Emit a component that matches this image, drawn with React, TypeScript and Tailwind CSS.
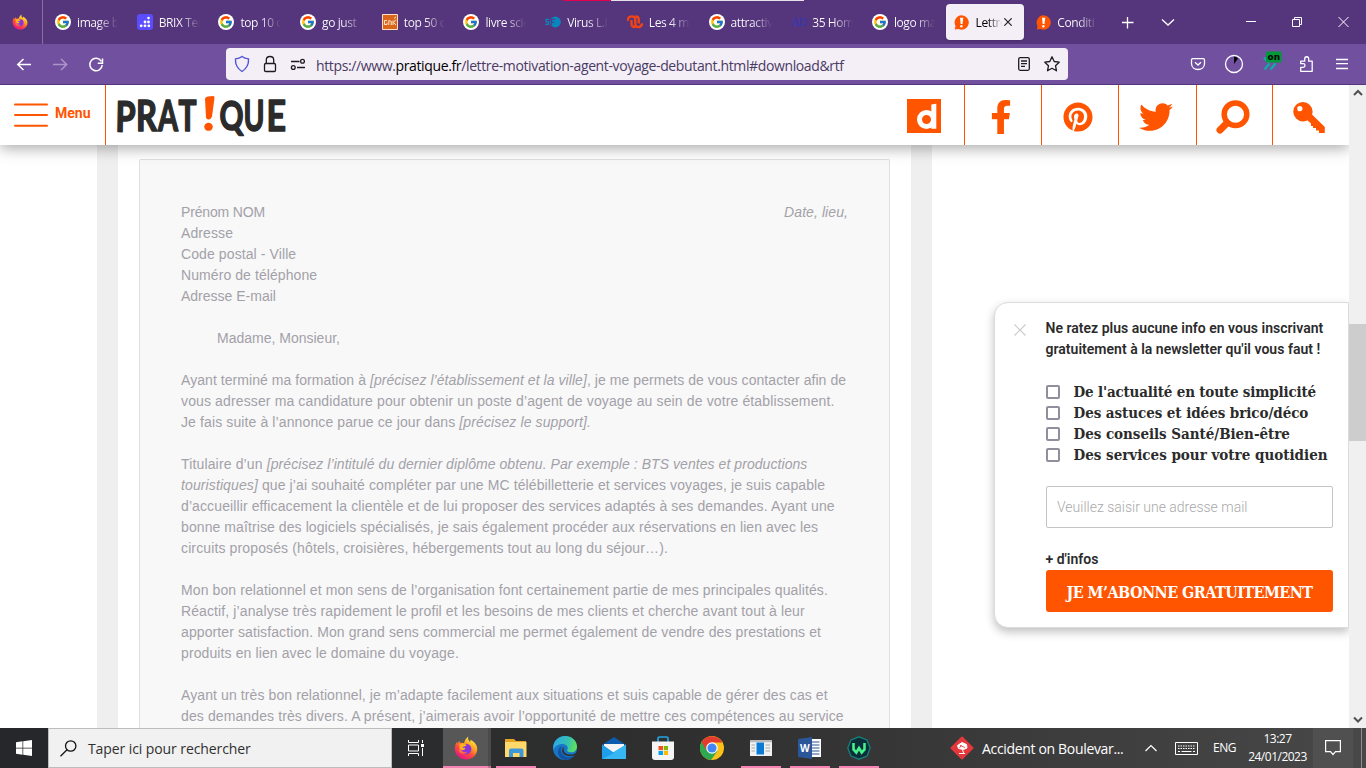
import React from "react";
import { FcGoogle } from "react-icons/fc";
import { FaFacebookF, FaPinterest, FaTwitter } from "react-icons/fa";

function Firefox({ size, id }: { size: number; id: string }) {
  return (
    <svg width={size} height={size} viewBox="0 0 24 24" className="shrink-0">
      <defs>
        <linearGradient id={id} x1="0.8" y1="0.05" x2="0.25" y2="0.95">
          <stop offset="0" stopColor="#fff14f" />
          <stop offset="0.35" stopColor="#ffa61e" />
          <stop offset="0.65" stopColor="#ff4a3d" />
          <stop offset="1" stopColor="#e31587" />
        </linearGradient>
      </defs>
      <path fill={`url(#${id})`} d="M14.5 0.6C13.2 3 15 4.6 16 6c.6-.5.5-1.700.3-2.200C20.600 6 23.400 9 23.200 13.500 22.900 19.500 18 23.500 12 23.500 5.500 23.500.8 18.500.8 12.500.8 9 2 7.300 3 5.800l.3 2C4.200 6.300 5 5.300 5.700 4.900c-.1 1 .2 1.700.7 2.200C8.500 6.600 9 7 10 7.300 10.500 4.500 12.300 1.900 14.500.6Z" />
      <circle cx="12.200" cy="13" r="5.200" fill="#8a35dc" />
      <path fill="#ffb31c" d="M5.500 8.500C8 6.800 11 7.600 12.600 9.200c-1 1.300-3.600 1.200-4.300 2.200 1.200.5 2.400.1 3.200.9-1.300 2.600-4.600 2.200-6 .2Z" />
      <path fill="#ff7139" d="M6 12c1 3.500 4.500 5 7.500 3.800-2 3-7.300 2.600-8.900-1.300Z" />
    </svg>
  );
}

function Brix() {
  return (
    <svg width="16" height="16" viewBox="0 0 16 16">
      <rect width="16" height="16" rx="3" fill="#5b4cff" />
      <g fill="#fff">
        <circle cx="11.500" cy="4" r="1.300" />
        <circle cx="8" cy="8" r="1.400" /><circle cx="11.500" cy="8" r="1.400" />
        <circle cx="4.200" cy="11.800" r="1.400" /><circle cx="8" cy="11.800" r="1.400" /><circle cx="11.800" cy="11.800" r="1.400" />
      </g>
    </svg>
  );
}

function Google() {
  return (
    <span className="flex size-4 items-center justify-center rounded-full bg-white">
      <FcGoogle size={14} />
    </span>
  );
}

function Gnk() {
  return (
    <svg width="16" height="16" viewBox="0 0 16 16">
      <path d="M.5.5h15v15H.5z" fill="#d9661a" stroke="#ffe0c4" />
      <path d="M5 6.500H2.500v4H5V8.700M6.800 11V6.500l2.500 1V11M11 6.500V11M14 5.500L11.500 8.500 14 11M12 4.500l2-1.700" fill="none" stroke="#fff0e0" strokeWidth=".9" />
    </svg>
  );
}

function Sf() {
  return (
    <svg width="17" height="16" viewBox="0 0 17 16">
      <circle cx="11" cy="8" r="5.800" fill="#0b86bd" />
      <path d="M4.300 5.300H1.200V7.800H3.700V10.500H.4" fill="none" stroke="#0b86bd" strokeWidth="1.300" />
      <path d="M10.500 5.300H6.800v6M6.800 8.200h3" fill="none" stroke="#55367c" strokeWidth="1.100" />
    </svg>
  );
}

function Loops() {
  return (
    <svg width="17" height="16" viewBox="0 0 17 16" fill="none" stroke="#f24316" strokeWidth="2.500" strokeLinejoin="round">
      <path d="M.4 7C1 3.500 2.500 2 5 2c2.300 0 3.800 1.500 3.800 3.500v5c0 2 1.200 3 3 3 2.300 0 3.700-1.500 4.500-4" />
      <path d="M4.800 6v4.500c0 1.800 1.200 3 4 3M8.800 2c2.700 0 3.700 1.300 3.700 3.400V9.500" />
    </svg>
  );
}

function Ad() {
  return <span className="w-4 text-center font-['Liberation_Serif'] text-[12px] leading-4 tracking-[-1px] text-[#3038bd]">AD</span>;
}

function Bang() {
  return (
    <svg width="15" height="15" viewBox="0 0 15 15" className="shrink-0">
      <path d="M7.500.3a7.200 7.200 0 1 1-3 13.700L.8 14.600 1.500 11A7.200 7.200 0 0 1 7.500.3Z" fill="#f50" />
      <path d="M6 2.800h3.300L8.500 9H6.700Z" fill="#fff" />
      <circle cx="7.400" cy="11.300" r="1.200" fill="#fff" />
    </svg>
  );
}

const tabs: { icon: React.ReactNode; text: string; active?: boolean }[] = [
  { icon: <Google />, text: "image b" },
  { icon: <Brix />, text: "BRIX Ter" },
  { icon: <Google />, text: "top 10 c" },
  { icon: <Google />, text: "go just" },
  { icon: <Gnk />, text: "top 50 c" },
  { icon: <Google />, text: "livre scie" },
  { icon: <Sf />, text: "Virus L.I" },
  { icon: <Loops />, text: "Les 4 m" },
  { icon: <Google />, text: "attractiv" },
  { icon: <Ad />, text: "35 Hom" },
  { icon: <Google />, text: "logo ma" },
  { icon: <Bang />, text: "Lettre", active: true },
  { icon: <Bang />, text: "Conditi" },
];

function TabBar() {
  return (
    <div className="relative flex h-11 shrink-0 bg-[#55367c] text-white">
      <div className="absolute top-0 left-[563px] flex h-px w-[241px]">
        <span className="w-12 bg-[#e3004f]" />
        <span className="flex-1 bg-[#e8e0ea]" />
      </div>
      <div className="flex w-[43px] items-center border-r border-[#86709f] pl-3">
        <Firefox size={16} id="ffTab" />
      </div>
      <div className="flex w-[1065px] items-center pl-[3px]">
        {tabs.map((t) => (
          <div key={t.text} className="w-[81.7px] shrink-0 px-px">
            <div className={t.active ? "flex h-9 w-[78px] items-center rounded bg-[#f4eef7] pl-2 text-black shadow" : "flex h-9 items-center pl-2"}>
              <span className="flex w-4 shrink-0 justify-center">{t.icon}</span>
              <span
                className={
                  t.active
                    ? "ml-1.5 w-[26px] bg-gradient-to-r from-black from-45% to-transparent bg-clip-text pt-0.5 font-['Open_Sans'] text-[12px] tracking-[-0.4px] whitespace-nowrap text-transparent"
                    : "ml-1.5 w-[41px] bg-gradient-to-r from-white from-50% to-transparent bg-clip-text pt-0.5 font-['Open_Sans'] text-[12px] tracking-[-0.4px] whitespace-nowrap text-transparent"
                }
              >
                {t.text}
              </span>
              {t.active && (
                <svg width="8" height="8" viewBox="0 0 8 8" stroke="#222" strokeWidth="1.200" className="ml-0.5 shrink-0"><path d="M.3.3l7.400 7.400M7.700.3.3 7.700" /></svg>
              )}
            </div>
          </div>
        ))}
      </div>
      <div className="flex flex-1 items-center text-white">
        <svg width="258" height="44" viewBox="1108 0 258 44" fill="none" stroke="currentColor">
          <path d="M1122 22.500h11.500M1127.500 17v11.500" strokeWidth="1.300" />
          <path d="M1162 19.500l6 5.500 6-5.500" strokeWidth="1.300" />
          <path d="M1246 21.500h10M1292.500 19.500h7v7h-7zM1294.500 19.500v-2h7v7h-2M1338.500 17l10 10M1348.500 17l-10 10" strokeWidth="1" />
        </svg>
      </div>
    </div>
  );
}

function Toolbar() {
  return (
    <div className="flex h-[41px] shrink-0 items-center border-b border-[#55367c] bg-[#7150a0] text-white">
      <svg width="226" height="40" viewBox="0 44 226 40" fill="none" stroke="currentColor" strokeWidth="1.500">
        <path d="M31 64.500H18M23.500 59l-5.700 5.500 5.700 5.500" />
        <path d="M53 64.500h13.500M61 59l5.700 5.500L61 70" opacity=".4" />
        <path d="M101.300 61.300A6.200 6.200 0 1 0 102.200 65M102.500 58.500v4.800h-4.800" />
      </svg>
      <div className="flex h-8 w-[842px] items-center rounded bg-[#f4eef7]">
        <svg width="90" height="32" viewBox="226 48 90 32" fill="none" stroke="#1c1b22" strokeWidth="1.300">
          <path d="M242 56.500c2 1.600 4.200 2.200 6.500 2.400.4 5.500-1.800 9.600-6.500 12.600-4.700-3-6.900-7.100-6.500-12.600 2.300-.2 4.500-.8 6.500-2.400Z" stroke="#4f55d8" strokeWidth="1.400" />
          <rect x="264.500" y="63.500" width="11" height="8" rx="1.300" />
          <path d="M266.300 63.500V60c0-4.700 7.400-4.700 7.400 0v3.500" />
          <path d="M291 61.500h8.500M297 67.500h8" strokeWidth="1.600" />
          <circle cx="302.500" cy="61.300" r="1.900" /><circle cx="293.300" cy="67.500" r="1.900" />
        </svg>
        <div className="flex-1 pt-0.5 font-['Open_Sans'] text-[14px] tracking-[-0.37px] whitespace-nowrap text-[#4a3b63]">
          https://www.<span className="text-black">pratique.fr</span>/lettre-motivation-agent-voyage-debutant.html#download&amp;rtf
        </div>
        <svg width="58" height="32" viewBox="1010 48 58 32" fill="none" stroke="#1c1b22" strokeWidth="1.300">
          <rect x="1018.700" y="57.700" width="10.600" height="12.600" rx="1.500" />
          <path d="M1021 61h6M1021 63.700h6M1021 66.300h4" />
          <path d="M1052 56.800l2.200 4.700 5 .7-3.700 3.500 1 5.100-4.500-2.500-4.500 2.500 1-5.100-3.700-3.500 5-.7Z" strokeLinejoin="round" />
        </svg>
      </div>
      <svg width="298" height="40" viewBox="1068 44 298 40" fill="none" stroke="currentColor" strokeWidth="1.300">
        <path d="M1192.700 58.700h10.600q1.200 0 1.200 1.200v3.600c0 8-13 8-13 0v-3.600q0-1.200 1.200-1.200ZM1195 62.300l3 2.800 3-2.800" />
        <circle cx="1234" cy="64" r="8.500" />
        <path d="M1234 56.500q2.500.2 4 2l-4 5.500Z" fill="#000" stroke="none" />
        <path d="M1264 57.500l5 5.500M1264.500 69.500l5-6M1270.500 69.500l5-6" stroke="#12aaa5" strokeWidth="2.400" />
        <rect x="1266" y="51.500" width="15.500" height="11" rx="1" fill="#009939" stroke="none" />
        <text x="1267.500" y="60" fill="#000" stroke="none" fontFamily="DejaVu Sans" fontWeight="bold" fontSize="9" textLength="12.500" lengthAdjust="spacingAndGlyphs">on</text>
        <path d="M1300.700 71.300v-4h2.500c2.400 0 2.400-3.600 0-3.600h-2.500v-2.500h4v-2.200c0-3 4-3 4 0v2.200h3.500v10.100Z" strokeLinejoin="round" />
        <path d="M1336 59.500h12M1336 63.700h12M1336 68.500h12" />
      </svg>
    </div>
  );
}

function SiteHeader() {
  return (
    <header className="relative z-10 flex h-[60px] shrink-0 bg-white text-[#ff5500] shadow-[0_3px_14px_rgba(0,0,0,0.35)]">
      <div className="flex w-[106px] items-center border-r border-[#ff5500] pl-3.5">
        <svg width="34" height="26" viewBox="0 0 34 26" stroke="currentColor" strokeWidth="2" strokeLinecap="round"><path d="M1 2.500h32M1 13h32M1 23.700h32" /></svg>
        <span className="ml-[7px] pb-1 font-[Roboto] text-[14px] font-bold">Menu</span>
      </div>
      <svg width="781" height="60" viewBox="106 85 781 60" fontFamily="Lato" fontWeight="700">
        <g fontSize="42" fill="#2b2b2b" stroke="#2b2b2b" strokeWidth="1.600" strokeLinejoin="round">
          <text transform="translate(115.200 131.500) rotate(1)" textLength="20" lengthAdjust="spacingAndGlyphs">P</text>
          <text x="136" y="130.500" textLength="21" lengthAdjust="spacingAndGlyphs">R</text>
          <text x="158" y="131" textLength="20" lengthAdjust="spacingAndGlyphs">A</text>
          <text x="178.500" y="131" textLength="18" lengthAdjust="spacingAndGlyphs">T</text>
          <text x="219.500" y="130" fontSize="40" textLength="24" lengthAdjust="spacingAndGlyphs">Q</text>
          <text x="243.500" y="130.500" textLength="21" lengthAdjust="spacingAndGlyphs">U</text>
          <text x="266.500" y="130.500" textLength="19.500" lengthAdjust="spacingAndGlyphs">E</text>
        </g>
        <path d="M205 98.500q.5-1.500 3-2l5-.5q1.700 0 1.500 1.800l-2.500 18.700q-1 2.800-3.300 3-2.300 0-2.700-2Z" fill="#f50" />
        <ellipse cx="208.500" cy="126.800" rx="4.300" ry="4" fill="#f50" />
      </svg>
      <div className="flex w-[78px] items-center border-r border-[#ff5500] pt-0.5 pl-5">
        <svg width="34" height="34" viewBox="0 0 34 34"><path fill="currentColor" d="M0 0h34v34H0z" /><circle cx="19.500" cy="20.500" r="7" fill="none" stroke="#fff" strokeWidth="5" /><path d="M24.300 5.500l5-.8v25h-5z" fill="#fff" /></svg>
      </div>
      <div className="flex w-[77px] items-center justify-center border-r border-[#ff5500] pt-1 pr-1">
        <FaFacebookF size={34} />
      </div>
      <div className="flex w-[77px] items-center justify-center border-r border-[#ff5500] pt-1 pr-1"><FaPinterest size={30} /></div>
      <div className="flex w-[78px] items-center justify-center border-r border-[#ff5500] pt-1 pr-1"><FaTwitter size={34} /></div>
      <div className="flex w-[76px] items-center justify-center border-r border-[#ff5500] pt-1 pr-1">
        <svg width="34" height="34" viewBox="0 0 34 34" fill="none" stroke="currentColor"><circle cx="19.500" cy="14.300" r="11.300" strokeWidth="5.500" /><path d="M10.500 23.500l-6.500 6.500" strokeWidth="7" strokeLinecap="round" /></svg>
      </div>
      <div className="flex flex-1 items-center justify-center pt-1.5 pr-1">
        <svg width="34" height="34" viewBox="0 0 34 34" fill="currentColor"><path fillRule="evenodd" d="M11 1a9.700 9.700 0 1 1-.1 19.400A9.700 9.700 0 0 1 11 1ZM7.800 5a2.600 2.600 0 1 0 .1 5.200A2.600 2.600 0 0 0 7.800 5Z" /><path d="M19 12.500L32.800 26v6H27v-2.500h-3v-2.500h-3V25h-2v-2.500l-4-3.500h-3Z" /></svg>
      </div>
    </header>
  );
}

type Line = [React.ReactNode, string];

const paragraphs: Line[][] = [
  [
    [<>Ayant terminé ma formation à <i>[précisez l’établissement et la ville]</i>, je me permets de vous contacter afin de</>, "tracking-[0.058px]"],
    ["vous adresser ma candidature pour obtenir un poste d’agent de voyage au sein de votre établissement.", "tracking-[0.13px]"],
    [<>Je fais suite à l’annonce parue ce jour dans <i>[précisez le support].</i></>, "tracking-[0.115px]"],
  ],
  [
    [<><span className="tracking-[0.15px]">Titulaire d’un </span><i>[précisez l’intitulé du dernier diplôme obtenu. Par exemple : BTS ventes et productions</i></>, "tracking-[0.06px]"],
    [<><i>touristiques]</i> que j’ai souhaité compléter par une MC télébilletterie et services voyages, je suis capable</>, "tracking-[0.11px]"],
    ["d’accueillir efficacement la clientèle et de lui proposer des services adaptés à ses demandes. Ayant une", "tracking-[0.11px]"],
    ["bonne maîtrise des logiciels spécialisés, je sais également procéder aux réservations en lien avec les", "tracking-[0.09px]"],
    ["circuits proposés (hôtels, croisières, hébergements tout au long du séjour…).", "tracking-[0.13px]"],
  ],
  [
    ["Mon bon relationnel et mon sens de l’organisation font certainement partie de mes principales qualités.", "tracking-[0.1px]"],
    ["Réactif, j’analyse très rapidement le profil et les besoins de mes clients et cherche avant tout à leur", "tracking-[0.11px]"],
    ["apporter satisfaction. Mon grand sens commercial me permet également de vendre des prestations et", "tracking-[0.1px]"],
    ["produits en lien avec le domaine du voyage.", "tracking-[0.11px]"],
  ],
  [
    ["Ayant un très bon relationnel, je m’adapte facilement aux situations et suis capable de gérer des cas et", "tracking-[0.1px]"],
    ["des demandes très divers. A présent, j’aimerais avoir l’opportunité de mettre ces compétences au service", "tracking-[0.11px]"],
  ],
];

function Letter() {
  return (
    <article className="h-full rounded-t-xs border border-b-0 border-[#e0e0e2] bg-[#f8f8f8] px-[41px] pt-[42px] font-['Liberation_Sans',sans-serif] text-[14px] leading-[21px] whitespace-nowrap text-[#a3a1a8]">
      <div className="flex justify-between">
        <address className="not-italic">
          <div className="tracking-[-0.15px]">Prénom NOM</div>
          <div className="tracking-[0.1px]">Adresse</div>
          <div className="tracking-[0.1px]">Code postal - Ville</div>
          <div className="tracking-[0.08px]">Numéro de téléphone</div>
          <div>Adresse E-mail</div>
        </address>
        <i className="tracking-[0.08px]">Date, lieu,</i>
      </div>
      <p className="mt-[21px] pl-9">Madame, Monsieur,</p>
      {paragraphs.map((p, i) => (
        <p key={i} className="mt-[21px]">
          {p.map(([line, cls], j) => <span key={j} className={`block ${cls}`}>{line}</span>)}
        </p>
      ))}
    </article>
  );
}

const topics = [
  { text: "De l'actualité en toute simplicité", cls: "tracking-[-0.17px]" },
  { text: "Des astuces et idées brico/déco", cls: "tracking-[-0.06px]" },
  { text: "Des conseils Santé/Bien-être", cls: "tracking-[-0.04px]" },
  { text: "Des services pour votre quotidien", cls: "tracking-[0px]" },
];

function Newsletter() {
  return (
    <aside className="absolute top-[217px] right-0 h-[326px] w-[355px] rounded-l-[14px] border border-[#dcdcde] bg-white pt-[15px] pr-[15px] pl-[51px] text-[#2b2b2b] shadow-[0_4px_10px_rgba(0,0,0,0.25)]">
      <svg width="12" height="12" viewBox="0 0 12 12" stroke="#ccc" strokeWidth="1.200" className="absolute top-[21px] left-[19px]"><path d="M.5.5l11 11M11.500.5l-11 11" /></svg>
      <p className="-ml-[0.5px] font-[Roboto] text-[14px] leading-[21px] font-semibold tracking-[0.02px] whitespace-nowrap">
        Ne ratez plus aucune info en vous inscrivant<br />gratuitement à la newsletter qu'il vous faut !
      </p>
      <div className="mt-[21px]">
        {topics.map((t) => (
          <label key={t.text} className="flex h-[21px] items-center">
            <span className="size-3.5 shrink-0 rounded-xs border-2 border-[#8f8f9d]" />
            <span className={`ml-[13.5px] pt-px font-['DejaVu_Serif_Condensed','DejaVu_Serif',serif] text-[15px] font-bold whitespace-nowrap ${t.cls}`}>{t.text}</span>
          </label>
        ))}
      </div>
      <div className="mt-[21px] flex h-[42px] items-center rounded-xs border border-[#c4c4c4] pl-[10px] font-[Roboto] text-[14px] font-light text-[#a9a9a9]">Veuillez saisir une adresse mail</div>
      <p className="mt-[21px] -ml-[0.5px] font-[Roboto] text-[14px] leading-[21px] font-semibold">+ d'infos</p>
      <button className="flex h-[42px] w-full items-center justify-center rounded-[3px] bg-[#ff5500] pt-[3px] font-['DejaVu_Serif_Condensed','DejaVu_Serif',serif] text-[16px] font-bold tracking-[-0.55px] whitespace-nowrap text-white">JE M’ABONNE GRATUITEMENT</button>
    </aside>
  );
}

function Explorer() {
  return (
    <svg width="24" height="24" viewBox="0 0 24 24"><path d="M1 3h9l2 2h10v5H1z" fill="#e5a323" /><path d="M1 6h21.500v15H1z" fill="#ffd96c" /><path d="M5 21v-6.500q0-2 2-2h10.500q2 0 2 2V21h-4v-4H9v4Z" fill="#3f97d8" /></svg>
  );
}
function Edge() {
  return (
    <svg width="24" height="24" viewBox="0 0 24 24">
      <defs>
        <linearGradient id="eg" x1="0" y1=".3" x2="1" y2=".5"><stop stopColor="#2ba8e8" /><stop offset=".6" stopColor="#35c1b1" /><stop offset="1" stopColor="#5fe25a" /></linearGradient>
      </defs>
      <circle cx="12" cy="12" r="12" fill="#1876c9" />
      <path d="M.3 10.500C1 4.500 6 0 12 0c7 0 12 5 12 10.500 0 3.500-2.500 5.800-6 5.800-3 0-4.300-1.200-3.800-2.300C16 11.500 13.500 8 9.500 8 5 8 1.500 10.500.3 14Z" fill="url(#eg)" />
      <path d="M9 10.500C6.500 13 7.500 20 15 21.200c3 .4 5.500-1 7.500-3.200C20 22 16.500 24 12.500 24 7 23.500 3.500 18 5.500 13.500 6.300 11.500 7.500 10.600 9 10.500Z" fill="#11539e" />
      <path d="M11.500 11c-2 2.500-.8 7 5 7.500 2.500.2 4.500-.6 6-1.600l1.200.6-.9 1.300C17 22 9 19.500 9 14.500c0-1.700 1-3 2.500-3.500Z" fill="#2f3031" />
    </svg>
  );
}
function Mail() {
  return (
    <svg width="24" height="24" viewBox="0 0 24 24"><path d="M0 9L12 1l12 8z" fill="#0b5caf" /><path d="M2 8h20v8H2z" fill="#f4f4f4" /><path d="M0 8.500L12 17l12-8.500V23H0z" fill="#1e8fe0" /><path d="M24 8.500V23H0Z" fill="#36b6f3" /><path d="M0 8.500L12 17l-12 6z" fill="#1f9eea" /></svg>
  );
}
function Store() {
  return (
    <svg width="24" height="24" viewBox="0 0 24 24"><path d="M7 7V2.500q0-1.500 1.500-1.500h7Q17 1 17 2.500V7" fill="none" stroke="#22a7e5" strokeWidth="1.700" /><path d="M1 5.500h22V21q0 3-3 3H4q-3 0-3-3Z" fill="#f5f5f5" /><path d="M7.500 10H12v4.200H7.500z" fill="#f25022" /><path d="M12.800 10h4.200v4.200h-4.200z" fill="#7fba00" /><path d="M7.500 15H12v4H7.500z" fill="#00a4ef" /><path d="M12.800 15h4.200v4h-4.200z" fill="#ffb900" /></svg>
  );
}
function Chrome() {
  return (
    <svg width="24" height="24" viewBox="0 0 24 24"><circle cx="12" cy="12" r="12" fill="#fbc116" /><path d="M12 12L1.600 6A12 12 0 0 0 11 24l6.500-9z" fill="#2da94f" /><path d="M1.600 6A12 12 0 0 1 22.400 6.500H12L7 15Z" fill="#e33b2e" /><circle cx="12" cy="12" r="5.800" fill="#fff" /><circle cx="12" cy="12" r="4.600" fill="#4285f4" /></svg>
  );
}
function AppWindow() {
  return (
    <svg width="22" height="18" viewBox="0 0 22 18"><path d="M0 1h22v16H0z" fill="#f1f1f1" /><path d="M0 1h22v2.200H0z" fill="#b9b9b9" /><path d="M6.500 3.500h7.500v12H6.500z" fill="#0a7ad6" /><path d="M1.500 6H5M1.500 9H5M1.500 12H5M15.500 6H20M15.500 9H20M15.500 12H20" stroke="#aaa" strokeWidth="1.200" /></svg>
  );
}
function Word() {
  return (
    <svg width="24" height="24" viewBox="0 0 24 24"><path d="M12 3h11v18H12z" fill="#fff" /><path d="M14 6h7.500M14 9h7.500M14 12h7.500M14 15h7.500M14 18h7.500" stroke="#2b579a" strokeWidth="1.200" /><path d="M0 3L14 1v22L0 21z" fill="#2b579a" /><text x="2" y="15.700" fill="#fff" fontFamily="Open Sans" fontWeight="bold" fontSize="10">W</text></svg>
  );
}
function Wolf() {
  return (
    <svg width="24" height="24" viewBox="0 0 24 24"><path d="M12 .8l8 3.200 3.200 8-3.200 8-8 3.200L4 20 .8 12 4 4Z" fill="#0c2d3a" stroke="#178277" strokeWidth="1.300" /><path d="M6.500 7v6.500l2.800 3 2.700-4.500 2.700 4.500 2.800-3V7" fill="none" stroke="#46f08a" strokeWidth="2.600" /></svg>
  );
}

const apps: { icon: React.ReactNode; running: boolean }[] = [
  { icon: <Explorer />, running: true },
  { icon: <Edge />, running: false },
  { icon: <Mail />, running: false },
  { icon: <Store />, running: false },
  { icon: <Chrome />, running: false },
  { icon: <AppWindow />, running: true },
  { icon: <Word />, running: true },
  { icon: <Wolf />, running: true },
];

function Taskbar() {
  return (
    <div className="flex h-10 shrink-0 bg-gradient-to-r from-[#25272a] via-[#2f2f2f] via-50% to-[#484848] font-['Open_Sans'] text-white">
      <div className="flex w-12 items-center justify-center">
        <svg width="16" height="16" viewBox="0 0 16 16" fill="#fff"><path d="M0 2.300l6.500-1v6.400H0zM7.200 1.200L16 0v7.700H7.200zM0 8.400h6.500v6.300L0 13.800zM7.200 8.400H16V16l-8.800-1.200z" /></svg>
      </div>
      <div className="flex w-[344px] items-center border border-[#bdbdbd] bg-[#f1f1f1] pl-[11px] text-[#303030]">
        <svg width="17" height="17" viewBox="0 0 17 17" fill="none" stroke="#111" strokeWidth="1.300"><circle cx="10.700" cy="6" r="5.200" /><path d="M7 9.700L.5 16.300" /></svg>
        <span className="ml-[11px] text-[14px] tracking-[-0.09px]">Taper ici pour rechercher</span>
      </div>
      <div className="flex w-[51px] items-center pl-4">
        <svg width="17" height="16" viewBox="0 0 17 16" fill="none" stroke="#fff"><path d="M.5 0v2.500h10V0M.5 5h10v6H.5zM.5 16v-2.500h10V16M14.500 0v3M14.500 8v8" /><path d="M13 4h3v3h-3z" fill="#fff" stroke="none" /></svg>
      </div>
      <div className="flex w-[45px] flex-col items-center justify-between border-b-2 border-[#f783b4] bg-[#575757] pt-2"><Firefox size={24} id="ffBar" /></div>
      <div className="w-[3px] border-b-2 border-[#c96c93] bg-[#4b4b4b]" />
      <div className="flex">
        {apps.map((a, i) => (
          <div key={i} className="flex w-[49px] justify-center">
            <span className={a.running ? "flex w-10 items-center justify-center border-b-2 border-[#f783b4] pt-0.5" : "flex w-10 items-center justify-center"}>{a.icon}</span>
          </div>
        ))}
      </div>
      <div className="ml-[67px] flex flex-1 items-center">
        <svg width="24" height="24" viewBox="0 0 24 24"><path d="M12 1.500L22.500 12 12 22.500 1.500 12Z" fill="#e5383c" stroke="#e5383c" strokeWidth="2" strokeLinejoin="round" /><path d="M7.500 9.500L12 6.500l4.500 2 .5 3.500-3.500 1.500-5-1ZM12.500 13.500l1 3.500M9 17.500h6" fill="#fff" stroke="#fff" /><path d="M10 9.500l5 2M9.500 12l2-3" stroke="#e5383c" strokeWidth=".8" /></svg>
        <span className="ml-2 w-[142px] text-[14px] tracking-[-0.33px] whitespace-nowrap">Accident on Boulevar...</span>
        <svg width="12" height="8" viewBox="0 0 12 8" fill="none" stroke="#fff" strokeWidth="1.200" className="ml-[21px]"><path d="M.5 7L6 1.500 11.500 7" /></svg>
        <svg width="23" height="13" viewBox="0 0 23 13" fill="none" stroke="#fff" className="ml-[18px]"><path d="M.5.5h22v12H.5z" /><path d="M3 4h17M3 6.500h17" strokeDasharray="1.500 1" /><path d="M3 9.500h2M6.500 9.500h10M18 9.500h2" /></svg>
        <span className="ml-[15px] w-6 text-[12px] tracking-[-0.5px]">ENG</span>
        <div className="ml-2 flex w-[65px] flex-col items-center text-[12px] leading-[18px] tracking-[-0.5px] whitespace-nowrap"><span>13:27</span><span>24/01/2023</span></div>
      </div>
      <div className="flex w-10 items-center justify-center bg-[#505050]">
        <svg width="16" height="16" viewBox="0 0 16 16" fill="none" stroke="#fff" strokeWidth="1.200"><path d="M.6.6h14.800v11H10.500L8 14.500l-2.500-2.900H.6Z" /></svg>
      </div>
      <div className="mr-1 w-[9px] border-r border-[#8d8d8d]" />
    </div>
  );
}

export default function App() {
  return (
    <div className="flex h-[768px] w-[1366px] flex-col overflow-hidden bg-white">
      <TabBar />
      <Toolbar />
      <div className="flex h-[643px] shrink-0">
        <div className="relative flex w-[1349px] flex-col overflow-hidden bg-white">
          <SiteHeader />
          <div className="flex min-h-0 flex-1 pl-[97px]">
            <main className="w-[835px] overflow-hidden border-x-[21px] border-[#efefef] bg-white px-[21px] pt-3.5"><Letter /></main>
          </div>
          <Newsletter />
        </div>
        <div className="flex w-[17px] flex-col items-center bg-[#f0f0f0]">
          <svg width="10" height="17" viewBox="0 0 10 17" fill="none" stroke="#505050" strokeWidth="2"><path d="M1 10l4-4 4 4" /></svg>
          <div className="mt-[222px] h-[117px] w-full bg-[#cdcdcd]" />
          <svg width="10" height="17" viewBox="0 0 10 17" fill="none" stroke="#505050" strokeWidth="2" className="mt-auto"><path d="M1 6.500l4 4 4-4" /></svg>
        </div>
      </div>
      <Taskbar />
    </div>
  );
}
